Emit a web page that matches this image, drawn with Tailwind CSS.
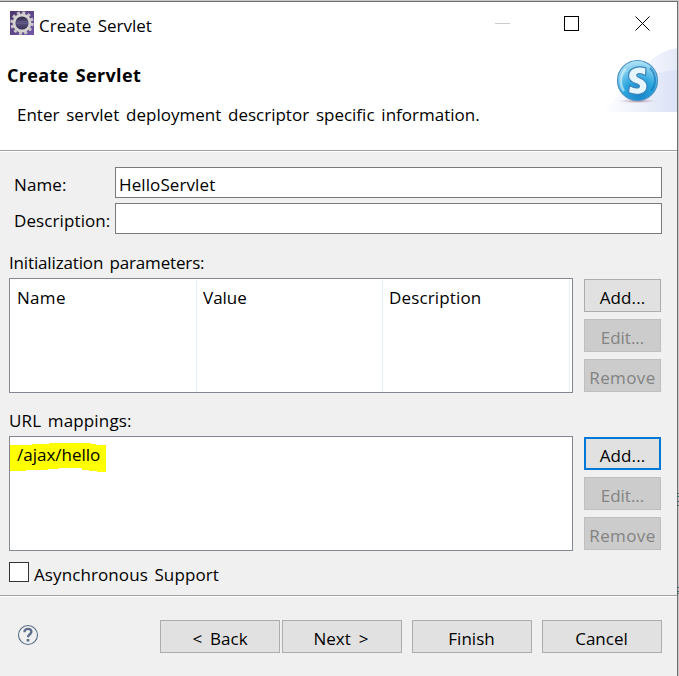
<!DOCTYPE html>
<html lang="en">
<head>
<meta charset="utf-8">
<title>Create Servlet</title>
<script src="https://cdn.jsdelivr.net/npm/@tailwindcss/browser@4"></script>
</head>
<body class="w-[679px] h-[676px] overflow-hidden bg-[#c8c8c8] font-['Open_Sans','Noto_Sans',sans-serif] text-[17px] leading-6 text-black whitespace-nowrap [word-spacing:2px]">
<div class="relative mt-px w-[678px] h-[675px] border-t border-r border-[#6e6e6e] bg-[#f0f0f0] flex flex-col">
  <header class="h-[149px] shrink-0 bg-white border-b border-[#a0a0a0] relative">
    <div class="flex items-start h-[60px] pl-[10px] pt-[9px]">
      <svg class="w-6 h-6 shrink-0" viewBox="0 0 24 24">
        <defs><linearGradient id="pu" x1="0" y1="0" x2="1" y2="1"><stop offset="0" stop-color="#4a3569"/><stop offset="1" stop-color="#7259a8"/></linearGradient>
        <linearGradient id="core" x1="0" y1="0" x2="0" y2="1"><stop offset="0" stop-color="#27213a"/><stop offset=".5" stop-color="#5b5280"/><stop offset="1" stop-color="#30264b"/></linearGradient></defs>
        <rect width="24" height="24" fill="url(#pu)"/>
        <circle cx="12" cy="12" r="10.300" fill="none" stroke="#c9c7c9" stroke-width="2.800" stroke-dasharray="3 2.393"/>
        <circle cx="12" cy="12" r="8" fill="url(#core)" stroke="#d4d3d0" stroke-width="2.800"/>
        <path d="M6.500 10.500h11M6 12.500h12" stroke="#6c6492" stroke-width=".6"/>
      </svg>
      <span class="ml-[5px] mt-[3px]">Create Servlet</span>
      <svg class="ml-auto mr-[26px] mt-1 w-[156px] h-[17px]" viewBox="0 0 156 17" fill="none" shape-rendering="crispEdges">
        <path d="M0 8.500h15" stroke="#ccc"/>
        <rect x="69.500" y="1.500" width="14" height="14" stroke="#000"/>
        <path d="M140.500 1.500l14 14M154.500 1.500l-14 14" stroke="#000" shape-rendering="auto"/>
      </svg>
    </div>
    <h1 class="pl-[7px] mt-[1px] font-bold text-[18px] tracking-[0.35px]">Create Servlet</h1>
    <p class="pl-[17px] mt-[16px] [word-spacing:2.400px]">Enter servlet deployment descriptor specific information.</p>
    <svg class="absolute right-0 top-[43px] w-[75px] h-[67px]" viewBox="0 0 75 67">
      <defs>
        <linearGradient id="w1"><stop offset="0" stop-color="#fff"/><stop offset=".4" stop-color="#fbfcff"/><stop offset="1" stop-color="#e5eaf8"/></linearGradient>
        <linearGradient id="w2"><stop offset="0" stop-color="#fff"/><stop offset="1" stop-color="#dbe2f6"/></linearGradient>
        <radialGradient id="ball" cx=".55" cy=".85" r=".85"><stop offset="0" stop-color="#1783c6"/><stop offset=".45" stop-color="#2ba6df"/><stop offset="1" stop-color="#b5e5f5"/></radialGradient>
        <radialGradient id="sh"><stop offset="0" stop-color="#a38397"/><stop offset="1" stop-color="#d8c8dc" stop-opacity="0"/></radialGradient>
      </defs>
      <path d="M0 67C24 54 38 8 75 3V67z" fill="url(#w1)"/>
      <path d="M0 67C22 44 42 27 75 25V67z" fill="url(#w2)"/>
      <ellipse cx="35.500" cy="56" rx="20" ry="2.500" fill="url(#sh)"/>
      <circle cx="35.500" cy="35.500" r="20" fill="url(#ball)" stroke="#4b91c5" stroke-width="1.200"/>
      <path d="M22 46a17 17 0 0 1 2-22" fill="none" stroke="#d8f5ff" stroke-width="2.500" opacity=".6"/>
      <path d="M48 23a17 17 0 0 1 1 23" fill="none" stroke="#1275b8" stroke-width="2" opacity=".65"/>
      <path d="M44 23L43.500 30.500C38.500 28 34.800 28.200 34.800 30.500C34.800 33.500 45 33 45 41C45 49.500 35 51 26.500 47.500L27.500 40.500C32 43.500 37.500 43.700 37.500 41.300C37.500 38 26.500 39 26.500 31C26.500 22.500 36 20.500 44 23Z" fill="#e6f6ff" stroke="#3f83ba" stroke-width="1.200"/>
    </svg>
  </header>
  <main class="border-t border-white h-[444px] shrink-0 pl-[9px] pr-[15px] flex flex-col">
    <div class="mt-[15px] h-[31px] flex items-center">
      <label class="w-[106px] pl-[5px] pt-[4px] tracking-[0.1px]">Name:</label>
      <div class="w-[547px] h-[31px] bg-white border border-[#7a7a7a] pl-[3px] pt-[5px] tracking-[0.1px]">HelloServlet</div>
    </div>
    <div class="mt-[5px] h-[31px] flex items-center">
      <label class="w-[106px] pl-[5px] pt-[4px] tracking-[0.1px]">Description:</label>
      <div class="w-[547px] h-[31px] bg-white border border-[#7a7a7a]"></div>
    </div>
    <div class="mt-[17px] tracking-[-0.150px]">Initialization parameters:</div>
    <div class="mt-[3px] flex">
      <div class="w-[564px] h-[115px] bg-white border border-[#828790] flex">
        <div class="w-[187px] mt-px border-r border-[#e5effa] pl-[7px] pt-[6px] tracking-[0.300px]">Name</div>
        <div class="w-[186px] mt-px border-r border-[#e5effa] pl-[6px] pt-[6px]">Value</div>
        <div class="w-[187px] mt-px border-r border-[#e5effa] pl-[6px] pt-[6px] tracking-[0.150px]">Description</div>
      </div>
      <div class="ml-[11px] mt-px flex flex-col gap-[7px] text-center">
        <div class="w-[77px] h-[33px] bg-[#e1e1e1] border border-[#adadad] pt-[6px] tracking-[0.100px]">Add...</div>
        <div class="w-[77px] h-[33px] bg-[#ccc] border border-[#bfbfbf] pt-[6px] text-[#838383]">Edit...</div>
        <div class="w-[77px] h-[33px] bg-[#ccc] border border-[#bfbfbf] pt-[6px] text-[#838383] tracking-[0.400px]">Remove</div>
      </div>
    </div>
    <div class="mt-[16px] tracking-[0.150px]">URL mappings:</div>
    <div class="mt-[3px] flex">
      <div class="w-[564px] h-[115px] bg-white border border-[#828790]">
        <div class="relative mt-[5px] pl-[7px] pt-px">
          <svg class="absolute left-0 top-0 w-24 h-[30px]" viewBox="0 0 96 30" fill="#ff0"><path d="M0 3H22V2H39V1H81V2H86V3H96V30H87V29H79V28H72V26H49V27H38V28H16V29H0z"/></svg>
          <span class="relative">/ajax/hello</span>
        </div>
      </div>
      <div class="ml-[11px] mt-px flex flex-col gap-[7px] text-center">
        <div class="w-[77px] h-[33px] bg-[#e1e1e1] border-2 border-[#0078d7] pt-[5px] tracking-[0.100px]">Add...</div>
        <div class="w-[77px] h-[33px] bg-[#ccc] border border-[#bfbfbf] pt-[6px] text-[#838383]">Edit...</div>
        <div class="w-[77px] h-[33px] bg-[#ccc] border border-[#bfbfbf] pt-[6px] text-[#838383] tracking-[0.400px]">Remove</div>
      </div>
    </div>
    <div class="mt-[11px] flex">
      <div class="w-5 h-5 bg-white border border-[#333]"></div>
      <span class="ml-[5px] mt-px tracking-[0.100px]">Asynchronous Support</span>
    </div>
  </main>
  <footer class="border-t border-[#a0a0a0] flex-1">
    <div class="border-t border-white pt-[23px] pl-[17px] flex">
      <svg class="w-[22px] h-[22px] mt-[4px]" viewBox="0 0 22 22" fill="none" stroke="#5b6d89"><circle cx="11" cy="11" r="9.500" stroke-width="1.100"/><path d="M7.500 8.200C7.300 3.800 14.400 3.800 14.400 7.700C14.400 10.300 11 10.300 11 13.300" stroke-width="2.400"/><path d="M11 15v2.500" stroke-width="2.600"/></svg>
      <div class="ml-[121px] flex text-center [word-spacing:3.500px]">
        <div class="w-[120px] h-[33px] bg-[#e1e1e1] border border-[#adadad] pt-[6px]">&lt; Back</div>
        <div class="ml-[2px] w-[120px] h-[33px] bg-[#e1e1e1] border border-[#adadad] pt-[6px] pr-[2px]">Next &gt;</div>
        <div class="ml-[10px] w-[120px] h-[33px] bg-[#e1e1e1] border border-[#adadad] pt-[6px] pr-px">Finish</div>
        <div class="ml-[10px] w-[120px] h-[33px] bg-[#e1e1e1] border border-[#adadad] pt-[6px] pr-px">Cancel</div>
      </div>
    </div>
  </footer>
  <svg class="absolute left-[677px] top-[488px] w-[2px] h-[106px]" viewBox="0 0 2 106" shape-rendering="crispEdges" stroke="#3d6668"><path d="M0 3.500h2M0 6.500h2M0 11.500h2M0 15.500h2M0 97.500h2M0 101.500h2M0 103.500h2"/></svg>
</div>
</body>
</html>
